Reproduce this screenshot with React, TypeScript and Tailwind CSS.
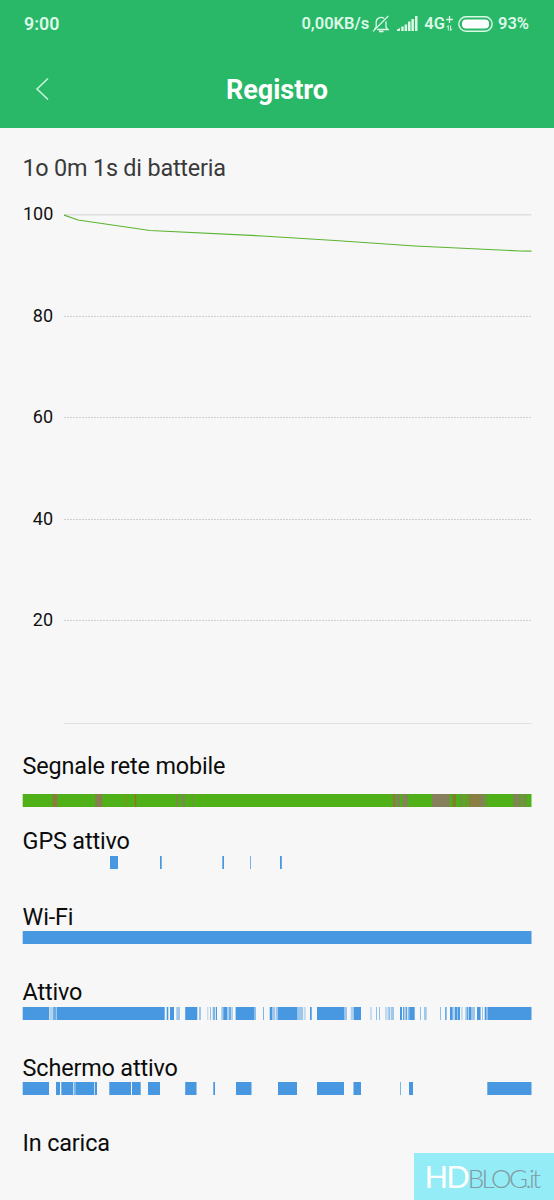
import { ReactNode } from "react";

// [start, end, opacity, color] in screen px
type Segment = [number, number, number?, string?];

const BLUE = "#4798e0";
const GREEN = "#50b017";

const mobileSignal: Segment[] = [
  [22.7, 531.5, 1, GREEN],
  [52.7, 57.3, 1, "#8a7c40"],
  [95.3, 102.3, 1, "#857f4c"],
  [125.3, 126.4, 1, "#8d8c20"],
  [134.7, 136.2, 1, "#a06c2c"],
  [176, 177.7, 1, "#7f8550"],
  [181.7, 185, 1, "#768b4c"],
  [192, 193.6, 0.5, "#857f5c"],
  [392.7, 395.7, 1, "#8a7c40"],
  [397, 400, 1, "#7d8558"],
  [402.7, 407.7, 1, "#857f5c"],
  [432, 449.7, 1, "#857f5c"],
  [452.5, 456, 1, "#857c30"],
  [460.3, 463, 0.6, "#857f5c"],
  [465, 468, 0.5, "#857f4c"],
  [468.7, 480.7, 1, "#897f42"],
  [480.7, 484.7, 1, "#857f5c"],
  [485.5, 488, 0.3, "#857f5c"],
  [513.3, 521, 1, "#7d8550"],
  [522.3, 526.7, 0.6, "#857f5c"],
];

const gps: Segment[] = [
  [110, 118],
  [160, 161.7],
  [222.3, 224],
  [250, 250.9, 0.8],
  [280, 281.8],
];

const wifi: Segment[] = [[22.7, 531.5]];

const awake: Segment[] = [
  [22.7, 49],
  [49.3, 52.3, 0.4],
  [52.7, 56, 0.8],
  [56, 57, 0.5],
  [57, 164.7],
  [166.7, 168.3],
  [170, 174],
  [176.3, 180, 0.5],
  [185.2, 197.3],
  [199, 201, 0.5],
  [207.3, 208.3, 0.4],
  [210, 211, 0.6],
  [212.7, 215, 0.7],
  [215.8, 217],
  [221.3, 223.3, 0.5],
  [223.3, 227.3],
  [227.5, 229, 0.4],
  [229, 231.3, 0.8],
  [231.7, 233, 0.4],
  [235, 236, 0.4],
  [236, 254.3],
  [254.3, 256, 0.6],
  [263, 264, 0.7],
  [269.7, 272],
  [272, 275.3, 0.5],
  [276, 278, 0.5],
  [278, 297.3],
  [297.3, 303, 0.5],
  [303.7, 305.7, 0.3],
  [310, 311.7],
  [317, 344.3],
  [344.3, 347, 0.5],
  [350.7, 353.7, 0.4],
  [353.7, 361],
  [370.3, 371.7, 0.4],
  [376, 377, 0.6],
  [379, 380, 0.6],
  [385, 387.7, 0.3],
  [388.3, 390, 0.6],
  [390.7, 394, 0.5],
  [400, 402],
  [403, 404.3, 0.9],
  [404.6, 405.6, 0.4],
  [405.7, 407, 0.9],
  [407.7, 409.3, 0.6],
  [409.3, 414.7],
  [420, 421, 0.6],
  [424, 426.7, 0.5],
  [440, 441, 0.6],
  [445, 446.7, 0.8],
  [450, 452.7],
  [453, 454.3, 0.4],
  [454.7, 457.3],
  [457.7, 460],
  [461, 462.7, 0.3],
  [465.3, 467, 0.5],
  [467, 468.5, 0.9],
  [469, 471.3],
  [471.3, 475, 0.5],
  [477, 480],
  [480, 481, 0.6],
  [482, 483, 0.5],
  [484.7, 486.3],
  [486.3, 487.7, 0.6],
  [487.7, 531.5],
];

const screenOn: Segment[] = [
  [22.7, 49],
  [56, 60],
  [61.3, 73],
  [73.7, 74.7],
  [75.3, 94.3],
  [95, 97],
  [109.3, 131],
  [132, 140.7],
  [148, 160],
  [185.2, 196.5],
  [213.3, 215],
  [236, 251.5],
  [278, 297],
  [317, 344],
  [353.5, 361],
  [400, 401, 0.7],
  [409, 413],
  [487.3, 531.5],
];

const levels = [100, 80, 60, 40, 20];

function Timeline({ segments }: { segments: Segment[] }) {
  return (
    <svg
      width="509"
      height="13"
      viewBox="23 0 509 13"
      className="block overflow-visible"
    >
      {segments.map(([start, end, opacity = 1, color = BLUE], i) => (
        <rect
          key={i}
          x={start}
          y="0"
          width={end - start}
          height="13"
          fill={color}
          opacity={opacity}
        />
      ))}
    </svg>
  );
}

function Row({ label, children }: { label: string; children?: ReactNode }) {
  return (
    <div className="h-[75.4px]">
      <div className="-ml-[0.4px] h-[28.5px] text-[23.4px] leading-[28px] tracking-[-0.16px] text-[#0c0c0c]">
        {label}
      </div>
      {children}
    </div>
  );
}

function StatusBar() {
  return (
    <div className="flex h-[47px] items-center pl-6 pr-[25px] text-[16.5px] font-semibold text-[#dcf8e7]">
      <span className="flex-1 pt-px text-[17.8px]">9:00</span>
      <span className="pt-[2px]">0,00KB/s</span>
      <svg
        width="18"
        height="18"
        viewBox="0 0 18 18"
        fill="none"
        stroke="currentColor"
        strokeWidth="1.3"
        className="ml-[3px]"
      >
        <path d="M4.2 12.2V7.2a4.8 4.8 0 0 1 8-3.6M14 6.2v6l2 2.3H5.2M4.2 12.2 2.4 14.5" />
        <path d="M16.3 1 1 16.4" />
        <path d="M7 16.4h4.5" strokeWidth="1.8" />
      </svg>
      <svg
        width="21"
        height="15"
        viewBox="0 0 21 15"
        className="ml-[7px]"
        fill="currentColor"
      >
        <path d="M0 15v-1.6l3-1.4v3zM4.2 10.5h2.5V15H4.2zM7.6 8.5h2.5V15H7.6zM11 5.5h2.5V15H11zM14.4 3h2.5v12h-2.5zM18 0h2.5v15H18z" />
      </svg>
      <span className="ml-[6px] pt-[2px]">4G</span>
      <svg
        width="7"
        height="16"
        viewBox="0 0 7 16"
        fill="none"
        stroke="currentColor"
        className="ml-px"
      >
        <path d="M3.5 0v7M.2 3.5h6.6" strokeWidth="1.3" />
        <path d="M2.3 14.5v-5L.7 11.2M4.6 9.5v5l1.7-1.7" />
      </svg>
      <svg width="35" height="16" viewBox="0 0 35 16" className="ml-[5px]">
        <rect
          x=".8"
          y=".8"
          width="33.4"
          height="14.4"
          rx="7.2"
          fill="none"
          stroke="currentColor"
          strokeWidth="1.4"
        />
        <rect x="4" y="3.5" width="27" height="9" rx="4" fill="white" />
      </svg>
      <span className="ml-[5px] pt-[2px]">93%</span>
    </div>
  );
}

export default function App() {
  return (
    <div className="relative h-[1200px] w-[554px] overflow-hidden bg-[#f7f7f7] font-['Roboto',sans-serif]">
      <header className="h-[128px] bg-[#28b867]">
        <StatusBar />
        <div className="grid h-[84px] grid-cols-[60px_1fr_60px] items-center">
          <svg
            width="14"
            height="24"
            viewBox="0 0 14 24"
            fill="none"
            stroke="#c5f3d8"
            strokeWidth="1.6"
            className="ml-[35px]"
          >
            <path d="M13 1.5 2 12l11 10.5" />
          </svg>
          <h1 className="pt-[3px] text-center text-[27px] font-bold text-white">
            Registro
          </h1>
        </div>
      </header>

      <main className="px-[23px]">
        <h2 className="-ml-[0.6px] pt-[25px] text-[23.4px] leading-[30px] tracking-[-0.2px] text-[#3a3a3a]">
          1o 0m 1s di batteria
        </h2>

        <div className="mt-[19px] flex">
          <div className="w-[30px] text-right text-[18px] text-[#111]">
            {levels.map((level) => (
              <div key={level} className="h-[101.5px] leading-[24px]">
                {level}
              </div>
            ))}
          </div>
          <svg
            width="468"
            height="530"
            viewBox="64 202 468 530"
            className="ml-[11px] shrink-0"
          >
            <path d="M64 214.8H531.5" stroke="#dedede" strokeWidth="1.6" />
            {[316.5, 417.5, 519.5, 620.5].map((y) => (
              <path
                key={y}
                d={`M64 ${y}H531.5`}
                stroke="#cfcfcf"
                strokeDasharray="2 1"
              />
            ))}
            <path d="M64 723.5H531.5" stroke="#e0e0e0" />
            <path
              d="M64 215 78 220 150 230.5 262 236 335 240.5 415 246 520 251 531.5 251.2"
              fill="none"
              stroke="#5ab530"
              strokeWidth="1.2"
            />
          </svg>
        </div>

        <div className="mt-5">
          <Row label="Segnale rete mobile">
            <div className="mt-[13.5px]">
              <Timeline segments={mobileSignal} />
            </div>
          </Row>
          <Row label="GPS attivo">
            <Timeline segments={gps} />
          </Row>
          <Row label="Wi-Fi">
            <Timeline segments={wifi} />
          </Row>
          <Row label="Attivo">
            <Timeline segments={awake} />
          </Row>
          <Row label="Schermo attivo">
            <Timeline segments={screenOn} />
          </Row>
          <Row label="In carica" />
        </div>
      </main>

      <div className="absolute bottom-0 right-0 flex h-[47px] w-[140px] items-baseline bg-[#94ecf6] pl-[10.5px] font-['Lato',sans-serif] leading-[47px]">
        <span className="text-[31px] tracking-[-2px] text-white">HD</span>
        <span className="text-[26px] font-light tracking-[-2.6px] text-[#7f9ba3]">
          BLOG.it
        </span>
      </div>
    </div>
  );
}
